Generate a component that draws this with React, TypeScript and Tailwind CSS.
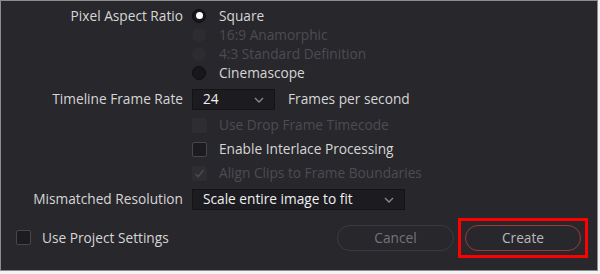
import React from "react";

const font = { fontFamily: '"Open Sans", "Noto Sans", sans-serif' };

function Radio({ checked, disabled }: { checked?: boolean; disabled?: boolean }) {
  return (
    <div
      className={
        "w-[14px] h-[14px] rounded-full flex items-center justify-center " +
        (disabled ? "bg-[#2d2c31]" : "bg-[#18171b] border border-[#0f0f11]")
      }
    >
      {checked && <div className="w-[7px] h-[7px] rounded-full bg-white" />}
    </div>
  );
}

function Check({ disabled, checked }: { disabled?: boolean; checked?: boolean }) {
  return (
    <div
      className={
        "w-[15px] h-[15px] rounded-[2px] flex items-center justify-center " +
        (disabled ? "bg-[#2e2d32]" : "bg-[#1c1b1f] border border-[#47464b]")
      }
    >
      {checked && (
        <svg width="11" height="11" viewBox="0 0 11 11">
          <path d="M1.5 6 L4.2 8.6 L9.5 2" fill="none" stroke="#4b4a50" strokeWidth="1.5" />
        </svg>
      )}
    </div>
  );
}

function Chevron() {
  return (
    <svg width="10" height="6" viewBox="0 0 10 6">
      <path d="M1 1 L5 5 L9 1" fill="none" stroke="#8a8a8e" strokeWidth="1.3" />
    </svg>
  );
}

export default function App() {
  return (
    <div className="w-[600px] h-[274px] bg-[#f2f2f2]" style={font}>
      <div className="w-[598px] h-[271px] border border-[#8c8c8c] bg-[#28272c] text-[13.7px] text-[#d6d6d6] flex flex-col pt-[5px]">
        {/* Pixel Aspect Ratio */}
        <div className="flex">
          <div className="w-[190px] text-right pr-[8px] h-[19px] leading-[19px]">Pixel Aspect Ratio</div>
          <div className="flex flex-col pl-[1px]">
            <div className="h-[19px] flex items-center gap-[13px]">
              <Radio checked />
              <span className="leading-[19px]">Square</span>
            </div>
            <div className="h-[19px] flex items-center gap-[13px]">
              <Radio disabled />
              <span className="leading-[19px] text-[#4d4c52]">16:9 Anamorphic</span>
            </div>
            <div className="h-[19px] flex items-center gap-[13px]">
              <Radio disabled />
              <span className="leading-[19px] text-[#4d4c52]">4:3 Standard Definition</span>
            </div>
            <div className="h-[19px] flex items-center gap-[13px]">
              <Radio />
              <span className="leading-[19px]">Cinemascope</span>
            </div>
          </div>
        </div>

        {/* Timeline Frame Rate */}
        <div className="flex items-center mt-[7px]">
          <div className="w-[190px] text-right pr-[8px]">Timeline Frame Rate</div>
          <div className="ml-[1px] w-[83px] h-[21px] bg-[#1c1b1f] border border-[#141316] flex items-center justify-between pl-[10px] pr-[10px]">
            <span className="text-[#f0f0f0]">24</span>
            <Chevron />
          </div>
          <span className="ml-[13px]">Frames per second</span>
        </div>

        {/* Checkboxes */}
        <div className="flex flex-col pl-[191px] mt-[3px]">
          <div className="h-[24px] flex items-center gap-[12px]">
            <Check disabled />
            <span className="text-[#4d4c52]">Use Drop Frame Timecode</span>
          </div>
          <div className="h-[24px] flex items-center gap-[12px]">
            <Check />
            <span>Enable Interlace Processing</span>
          </div>
          <div className="h-[24px] flex items-center gap-[12px]">
            <Check disabled checked />
            <span className="text-[#4d4c52]">Align Clips to Frame Boundaries</span>
          </div>
        </div>

        {/* Mismatched Resolution */}
        <div className="flex items-center mt-[4px]">
          <div className="w-[190px] text-right pr-[8px]">Mismatched Resolution</div>
          <div className="ml-[1px] w-[213px] h-[21px] bg-[#1c1b1f] border border-[#141316] flex items-center justify-between pl-[10px] pr-[10px]">
            <span className="text-[#f0f0f0]">Scale entire image to fit</span>
            <Chevron />
          </div>
        </div>

        {/* Bottom */}
        <div className="flex items-center mt-[8px] pl-[15px] pr-[9px]">
          <div className="flex items-center gap-[11px]">
            <Check />
            <span>Use Project Settings</span>
          </div>
          <div className="flex-1" />
          <div className="w-[117px] h-[26px] rounded-full border border-[#3b3a40] flex items-center justify-center text-[#75747a] mr-[4px]">
            Cancel
          </div>
          <div className="border-[3px] border-[#ff0000] p-[4px]">
            <div className="w-[116px] h-[26px] rounded-full border border-[#9a3b3b] flex items-center justify-center text-[#b8b8bc]">
              Create
            </div>
          </div>
        </div>
      </div>
    </div>
  );
}
